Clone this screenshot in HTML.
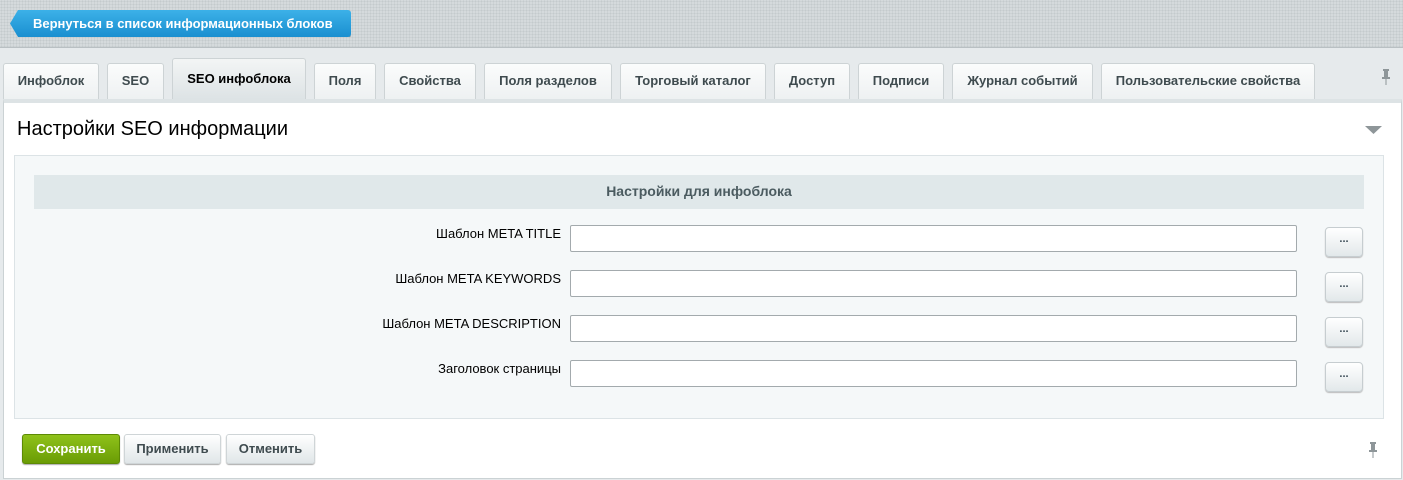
<!DOCTYPE html>
<html><head><meta charset="utf-8"><style>
*{box-sizing:border-box;margin:0;padding:0}
body{width:1403px;height:480px;background:#e6eaec;font-family:"Liberation Sans",sans-serif;position:relative;overflow:hidden}
.top{position:absolute;left:0;top:0;width:1403px;height:48px;background:#d5dadc;background-image:radial-gradient(#c4cacc 1px,transparent 1px);background-size:3px 3px;border-bottom:1px solid #b9c0c3}
.back{position:absolute;left:10px;top:10px;width:341px;height:27px;background:linear-gradient(#3cb1e8,#1a8fd0);border-radius:3px;color:#fff;font-weight:bold;font-size:13px;line-height:27px;padding-left:23px;clip-path:polygon(8px 0,100% 0,100% 100%,8px 100%,0 50%);box-shadow:0 1px 1px #888}
.tab{position:absolute;top:63px;height:36px;background:linear-gradient(#fbfcfc,#eef1f2);border:1px solid #cdd3d5;border-bottom:none;border-radius:3px 3px 0 0;font-size:13px;font-weight:bold;color:#3f4b4f;text-align:center;line-height:34px}
.tab.act{top:58px;height:41px;background:linear-gradient(#f3f5f5,#dde3e5);color:#000;line-height:40px}
.panel{position:absolute;left:3px;top:99px;width:1399px;height:380px;background:#fff;border:1px solid #cbd2d4;border-top:4px solid #dde3e5}
.title{position:absolute;left:17px;top:118px;font-size:20px;color:#000}
.inner{position:absolute;left:14px;top:155px;width:1370px;height:264px;background:#f5f8f9;border:1px solid #dce3e6}
.hdr{position:absolute;left:34px;top:175px;width:1330px;height:34px;background:#e0e8ea;text-align:center;font-weight:bold;font-size:14px;color:#4b5b60;line-height:32px}
.lbl{position:absolute;right:842px;font-size:13px;color:#000}
.ta{position:absolute;left:570px;width:727px;height:27px;background:#fff;border:1px solid #a3aaad;border-radius:2px}
.dot{position:absolute;left:1325px;width:38px;height:30px;background:linear-gradient(#fff,#e2e8ea);border:1px solid #c6cdd0;border-radius:4px;font-size:11px;font-weight:bold;text-align:center;line-height:22px;color:#3a4a55;box-shadow:0 1px 1px #bbb}
.btn{position:absolute;top:434px;height:30px;border-radius:3px;font-size:13px;font-weight:bold;text-align:center;line-height:28px;box-shadow:0 1px 1px #aaa}
.pin{position:absolute;width:8px;height:16px}
</style></head><body>
<div class="top"><div class="back">Вернуться в список информационных блоков</div></div>
<div class="tab" style="left:3px;width:96px">Инфоблок</div>
<div class="tab" style="left:107px;width:57px">SEO</div>
<div class="tab act" style="left:172px;width:134px">SEO инфоблока</div>
<div class="tab" style="left:314px;width:62px">Поля</div>
<div class="tab" style="left:384px;width:92px">Свойства</div>
<div class="tab" style="left:484px;width:128px">Поля разделов</div>
<div class="tab" style="left:620px;width:146px">Торговый каталог</div>
<div class="tab" style="left:774px;width:76px">Доступ</div>
<div class="tab" style="left:858px;width:86px">Подписи</div>
<div class="tab" style="left:952px;width:141px">Журнал событий</div>
<div class="tab" style="left:1101px;width:214px">Пользовательские свойства</div>
<svg class="pin" style="left:1382px;top:69px" viewBox="0 0 8 16"><rect x="1" y="0" width="6" height="2" fill="#8e9699"/><rect x="2" y="2" width="4" height="6" fill="#8e9699"/><rect x="0" y="8" width="8" height="2" fill="#8e9699"/><rect x="3.5" y="10" width="1" height="6" fill="#8e9699"/></svg>
<div class="panel"></div>
<div class="title">Настройки SEO информации</div>
<svg style="position:absolute;left:1365px;top:126px" width="17" height="8"><polygon points="0,0 17,0 8.5,8" fill="#8e9699"/></svg>
<div class="inner"></div>
<div class="hdr">Настройки для инфоблока</div>
<div class="lbl" style="top:226px">Шаблон META TITLE</div>
<div class="ta" style="top:225px"></div><div class="dot" style="top:227px">...</div>
<div class="lbl" style="top:271px">Шаблон META KEYWORDS</div>
<div class="ta" style="top:270px"></div><div class="dot" style="top:272px">...</div>
<div class="lbl" style="top:316px">Шаблон META DESCRIPTION</div>
<div class="ta" style="top:315px"></div><div class="dot" style="top:317px">...</div>
<div class="lbl" style="top:361px">Заголовок страницы</div>
<div class="ta" style="top:360px"></div><div class="dot" style="top:362px">...</div>
<div class="btn" style="left:22px;width:98px;background:linear-gradient(#8fc21a,#6a9c05);color:#fff;border:1px solid #5d8a05">Сохранить</div>
<div class="btn" style="left:124px;width:97px;background:linear-gradient(#fff,#e0e6e8);color:#3f4b4f;border:1px solid #cfd5d7">Применить</div>
<div class="btn" style="left:226px;width:89px;background:linear-gradient(#fff,#e0e6e8);color:#3f4b4f;border:1px solid #cfd5d7">Отменить</div>
<svg class="pin" style="left:1369px;top:442px" viewBox="0 0 8 16"><rect x="1" y="0" width="6" height="2" fill="#8e9699"/><rect x="2" y="2" width="4" height="6" fill="#8e9699"/><rect x="0" y="8" width="8" height="2" fill="#8e9699"/><rect x="3.5" y="10" width="1" height="6" fill="#8e9699"/></svg>
</body></html>
